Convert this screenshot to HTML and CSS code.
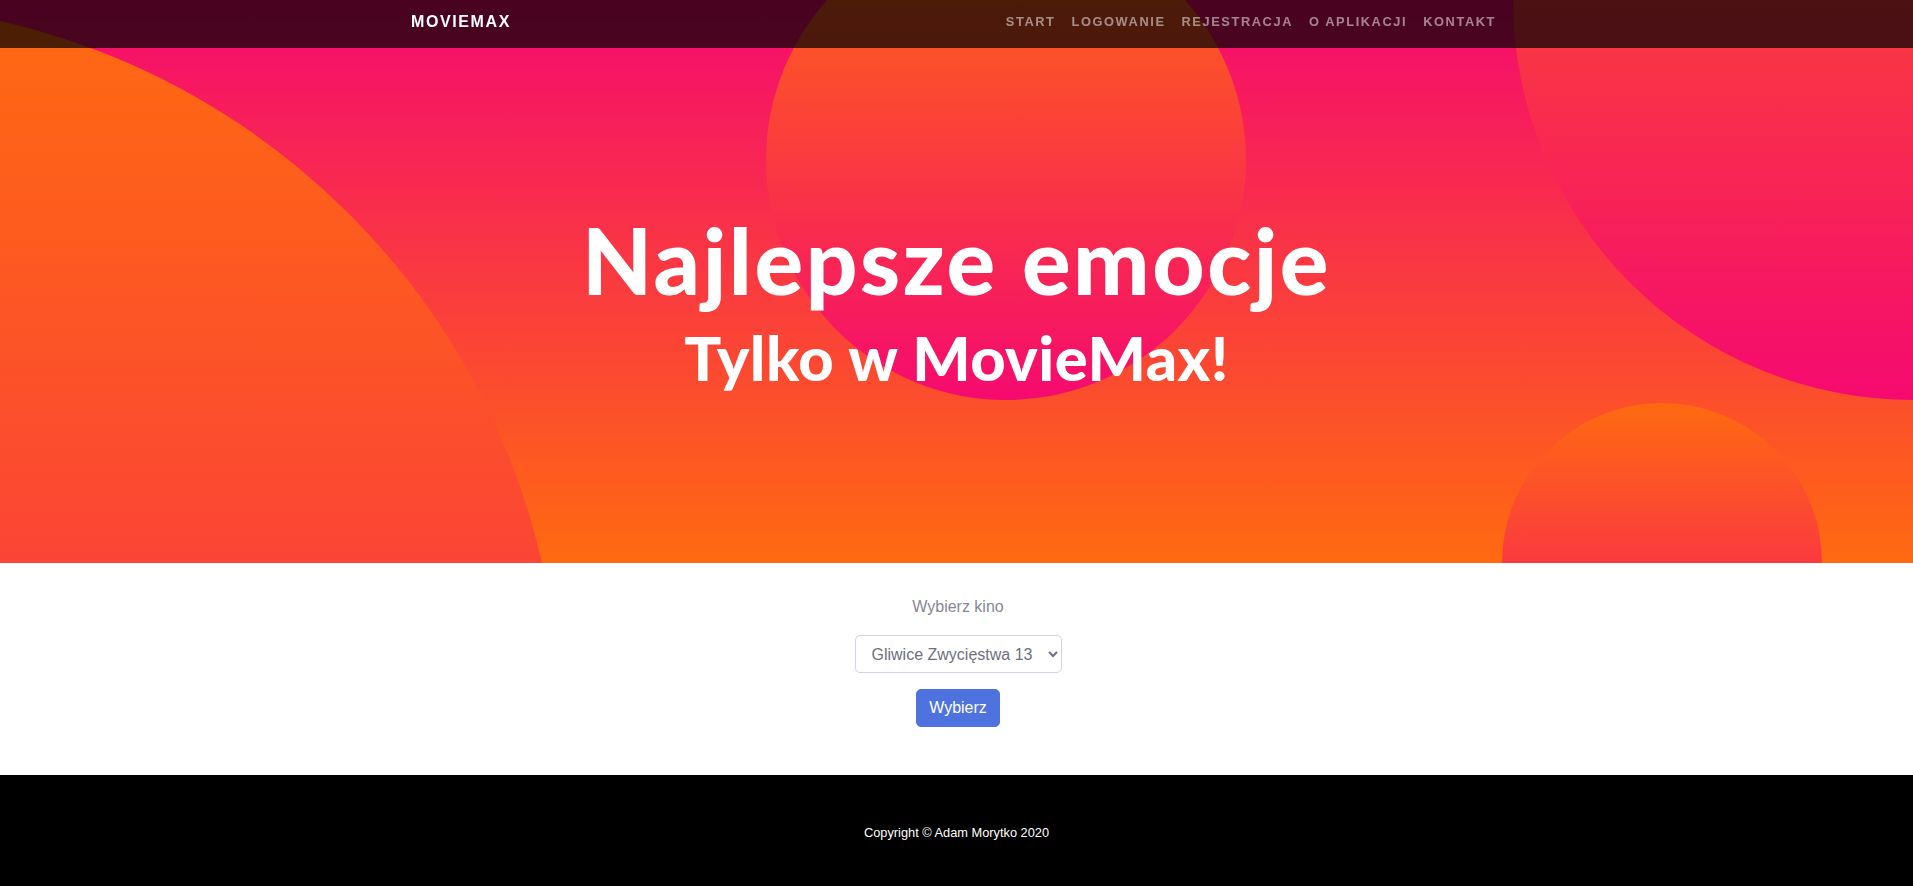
FILE: index.html
```html
<!DOCTYPE html>
<html lang="pl">
<head>
<meta charset="utf-8">
<title>MovieMax</title>
<link rel="stylesheet" href="styles.css">
</head>
<body>
<nav class="navbar">
  <div class="nav-inner">
    <a class="brand" href="#">MovieMax</a>
    <ul class="nav-links">
      <li><a class="nav-link" href="#">Start</a></li>
      <li><a class="nav-link" href="#">Logowanie</a></li>
      <li><a class="nav-link" href="#">Rejestracja</a></li>
      <li><a class="nav-link" href="#">O aplikacji</a></li>
      <li><a class="nav-link" href="#">Kontakt</a></li>
    </ul>
  </div>
</nav>
<header class="masthead">
  <div class="masthead-content">
    <h1 class="masthead-heading">Najlepsze emocje</h1>
    <h2 class="masthead-subheading">Tylko w MovieMax!</h2>
  </div>
  <div class="bg-circle bg-circle-1"></div>
  <div class="bg-circle bg-circle-2"></div>
  <div class="bg-circle bg-circle-3"></div>
  <div class="bg-circle bg-circle-4"></div>
</header>
<section class="picker">
  <form class="picker-form">
    <label class="picker-label" for="kino">Wybierz kino</label>
    <select id="kino" class="picker-select">
      <option>Gliwice Zwycięstwa 13</option>
    </select>
    <button class="btn-primary" type="button">Wybierz</button>
  </form>
</section>
<footer class="footer">
  <p class="copy">Copyright © Adam Morytko 2020</p>
</footer>
</body>
</html>
```

FILE: styles.css
```css
* { box-sizing: border-box; }

html, body {
  margin: 0;
  padding: 0;
}

body {
  font-family: "Liberation Sans", Arial, sans-serif;
  font-size: 16px;
  line-height: 1.5;
  color: #858796;
  background: #fff;
}

.navbar {
  position: fixed;
  top: 0;
  left: 0;
  right: 0;
  height: 48px;
  background-color: rgba(0, 0, 0, 0.7);
  z-index: 10;
}

.nav-inner {
  width: 1095px;
  height: 100%;
  margin: 0 auto;
  padding: 0 0 4px 2px;
  display: flex;
  align-items: center;
  justify-content: space-between;
}

.brand {
  color: #fff;
  text-decoration: none;
  text-transform: uppercase;
  font-size: 16px;
  font-weight: 700;
  letter-spacing: 1.6px;
  line-height: 24px;
}

.nav-links {
  list-style: none;
  margin: 0;
  padding: 0;
  display: flex;
}

.nav-link {
  display: block;
  padding: 0 8px;
  color: rgba(255, 255, 255, 0.5);
  text-decoration: none;
  text-transform: uppercase;
  font-size: 12.8px;
  font-weight: 700;
  letter-spacing: 1.6px;
  line-height: 20px;
}

.masthead {
  position: relative;
  overflow: hidden;
  height: 563px;
  background: linear-gradient(0deg, #ff6a10 0%, #f50a6f 100%);
  color: #fff;
  text-align: center;
}

.masthead-content {
  position: relative;
  z-index: 1;
  padding-top: 215px;
}

.masthead-heading {
  margin: 0;
  font-family: "Lato", sans-serif;
  font-weight: 900;
  font-size: 90.7px;
  line-height: 1;
  letter-spacing: 2.6px;
}

.masthead-subheading {
  margin: 21px 0 0;
  font-family: "Lato", sans-serif;
  font-weight: 900;
  font-size: 61.4px;
  line-height: 1;
  letter-spacing: 0.5px;
}

.bg-circle {
  position: absolute;
  z-index: 0;
  border-radius: 100%;
  background: linear-gradient(0deg, #f50a6f 0%, #ff6a10 100%);
}

.bg-circle-1 {
  width: 1440px;
  height: 1440px;
  bottom: -880px;
  left: -880px;
}

.bg-circle-2 {
  width: 800px;
  height: 800px;
  top: -400px;
  right: -400px;
}

.bg-circle-3 {
  width: 320px;
  height: 320px;
  bottom: -160px;
  right: calc(5% - 5px);
}

.bg-circle-4 {
  width: 480px;
  height: 480px;
  top: -80px;
  right: calc(35% - 3px);
}

.picker {
  padding: 32px 0 48px;
}

.picker-form {
  display: flex;
  flex-direction: column;
  align-items: center;
  gap: 16px;
  padding-left: 3px;
}

.picker-label {
  color: #858796;
  font-size: 16px;
  line-height: 24px;
}

.picker-select {
  width: 207px;
  height: 38px;
  padding: 6px 12px;
  font-family: "Liberation Sans", Arial, sans-serif;
  font-size: 16px;
  color: #6e707e;
  background-color: #fff;
  border: 1px solid #d1d3e2;
  border-radius: 5px;
}

.btn-primary {
  height: 38px;
  padding: 6px 12px;
  font-family: "Liberation Sans", Arial, sans-serif;
  font-size: 16px;
  line-height: 24px;
  color: #fff;
  background-color: #4e73df;
  border: 1px solid #4e73df;
  border-radius: 5px;
}

.footer {
  background: #000;
  padding: 48px 0;
}

.copy {
  margin: 0;
  color: #fff;
  text-align: center;
  font-size: 12.8px;
  line-height: 19.2px;
}
```
